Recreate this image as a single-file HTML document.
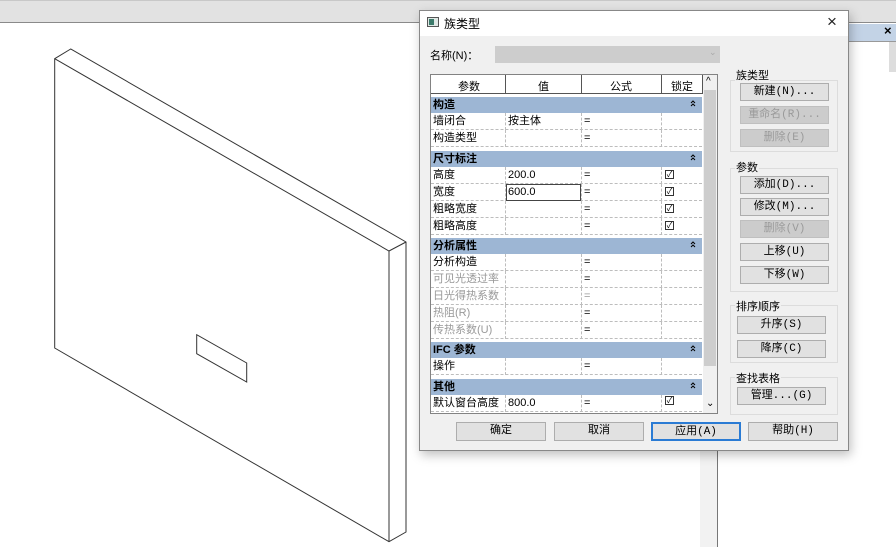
<!DOCTYPE html>
<html><head><meta charset="utf-8"><style>
*{box-sizing:border-box;margin:0;padding:0}
body{width:896px;height:547px;position:relative;overflow:hidden;background:#fff;font-family:"Liberation Sans","Noto Sans CJK SC",sans-serif;font-size:11px;color:#000}
.a{position:absolute}
.btn{position:absolute;background:#e1e1e1;border:1px solid #adadad;text-align:center;font-size:11px;line-height:16px;font-family:"Liberation Mono","Noto Sans CJK SC",monospace}
.dis{background:#cccccc;border-color:#bfbfbf;color:#9a9a9a}
.grp{position:absolute;border:1px solid #dcdcdc}
.lbl{position:absolute;font-size:11px;background:#f0f0f0;padding:0 1px}
.row{position:absolute;left:431px;width:271px;height:17px;background:#fff;border-bottom:1px dashed #bdbdbd}
.row span{position:absolute;top:1px;line-height:15px;font-size:11px}
.c{position:absolute;top:0;height:17px;border-left:1px dashed #bdbdbd}
.hd{position:absolute;left:431px;width:271px;height:17px;background:#9db6d4;font-weight:bold;line-height:17px;padding-left:2px;font-size:11px;border-top:1px solid #fff}
.hd svg{position:absolute;right:6px;top:3px}
.g{color:#999}
.cb{position:absolute;left:234px;top:3px;width:9px;height:9px;border:1px solid #333;font-size:8px;line-height:7px;text-align:center}
</style></head><body>
<div class="a" style="left:0;top:0;width:896px;height:23px;background:#e2e2e2;border-bottom:1px solid #8a8a8a"></div>
<div class="a" style="left:0;top:0;width:896px;height:1px;background:#c8c8c8"></div>
<div class="a" style="left:845px;top:24px;width:51px;height:18px;background:#c3d3e6;border-bottom:1px solid #999"></div>
<div class="a" style="left:884px;top:23px;font-size:13px;font-weight:bold">×</div>
<div class="a" style="left:889px;top:42px;width:7px;height:30px;background:#ddd"></div>
<div class="a" style="left:700px;top:450px;width:17px;height:97px;background:#f2f2f2"></div>
<div class="a" style="left:717px;top:450px;width:1px;height:97px;background:#777"></div>

<svg class="a" style="left:0;top:0" width="420" height="547" fill="none" stroke="#333" stroke-width="1">
<polygon points="70.7,49 54.7,58.7 54.7,348 389,541.7 406,532 406,242"/>
<polyline points="54.7,58.7 389,251 406,242"/>
<line x1="389" y1="251" x2="389" y2="541.7"/>
<polygon points="196.7,334.7 196.7,353.7 246.7,382 246.7,363"/>
</svg>

<div class="a" style="left:419px;top:10px;width:430px;height:441px;background:#f0f0f0;border:1px solid #888;box-shadow:2px 4px 10px rgba(0,0,0,.25)"></div>
<div class="a" style="left:420px;top:11px;width:428px;height:25px;background:#fff"></div>
<div class="a" style="left:427px;top:17px;width:12px;height:10px;border:1px solid #555;background:#dfe8e5"><div style="position:absolute;left:1px;top:1px;width:5px;height:6px;background:#3b7a6a"></div></div>
<div class="a" style="left:444px;top:15px;font-size:12px">族类型</div>
<div class="a" style="left:827px;top:12px;font-size:17px;color:#222">×</div>
<div class="a" style="left:430px;top:47px;font-size:11px">名称(N)：</div>
<div class="a" style="left:495px;top:46px;width:225px;height:17px;background:#cdcdcd"></div>
<div class="a" style="left:709px;top:47px;font-size:9px;color:#aaa">⌄</div>

<div class="a" style="left:430px;top:74px;width:288px;height:340px;border:1px solid #828282;background:#fff"></div>
<div class="a" style="left:431px;top:75px;width:271px;height:19px;background:#fff;border-bottom:1px solid #555"></div>
<div class="a" style="left:505px;top:75px;width:1px;height:19px;background:#555"></div>
<div class="a" style="left:581px;top:75px;width:1px;height:19px;background:#555"></div>
<div class="a" style="left:661px;top:75px;width:1px;height:19px;background:#555"></div>
<div class="a" style="left:702px;top:75px;width:1px;height:19px;background:#555"></div>
<div class="a" style="left:458px;top:78px">参数</div>
<div class="a" style="left:538px;top:78px">值</div>
<div class="a" style="left:610px;top:78px">公式</div>
<div class="a" style="left:671px;top:78px">锁定</div>
<div class="a" style="left:703px;top:75px;width:14px;height:338px;background:#f0f0f0"></div>
<div class="a" style="left:704px;top:90px;width:12px;height:276px;background:#cdcdcd"></div>
<div class="a" style="left:706px;top:76px;font-size:10px">^</div>
<div class="a" style="left:706px;top:398px;font-size:10px">⌄</div>

<div class="hd" style="top:96px">构造<svg width="6" height="7"><path d="M1 3L3 1L5 3M1 6L3 4L5 6" stroke="#000" fill="none"/></svg></div>
<div class="row" style="top:113px"><span style="left:2px">墙闭合</span><div class="c" style="left:74px"></div><span style="left:77px">按主体</span><div class="c" style="left:150px"></div><span style="left:153px">=</span><div class="c" style="left:230px"></div></div>
<div class="row" style="top:130px"><span style="left:2px">构造类型</span><div class="c" style="left:74px"></div><div class="c" style="left:150px"></div><span style="left:153px">=</span><div class="c" style="left:230px"></div></div>
<div class="hd" style="top:150px">尺寸标注<svg width="6" height="7"><path d="M1 3L3 1L5 3M1 6L3 4L5 6" stroke="#000" fill="none"/></svg></div>
<div class="row" style="top:167px"><span style="left:2px">高度</span><div class="c" style="left:74px"></div><span style="left:77px">200.0</span><div class="c" style="left:150px"></div><span style="left:153px">=</span><div class="c" style="left:230px"></div><div class="cb">✓</div></div>
<div class="row" style="top:184px"><span style="left:2px">宽度</span><div class="c" style="left:74px"></div><div class="a" style="left:75px;top:0;width:75px;height:17px;border:1px solid #444"></div><span style="left:77px">600.0</span><div class="c" style="left:150px"></div><span style="left:153px">=</span><div class="c" style="left:230px"></div><div class="cb">✓</div></div>
<div class="row" style="top:201px"><span style="left:2px">粗略宽度</span><div class="c" style="left:74px"></div><div class="c" style="left:150px"></div><span style="left:153px">=</span><div class="c" style="left:230px"></div><div class="cb">✓</div></div>
<div class="row" style="top:218px"><span style="left:2px">粗略高度</span><div class="c" style="left:74px"></div><div class="c" style="left:150px"></div><span style="left:153px">=</span><div class="c" style="left:230px"></div><div class="cb">✓</div></div>
<div class="hd" style="top:237px">分析属性<svg width="6" height="7"><path d="M1 3L3 1L5 3M1 6L3 4L5 6" stroke="#000" fill="none"/></svg></div>
<div class="row" style="top:254px"><span style="left:2px">分析构造</span><div class="c" style="left:74px"></div><div class="c" style="left:150px"></div><span style="left:153px">=</span><div class="c" style="left:230px"></div></div>
<div class="row" style="top:271px"><span class="g" style="left:2px">可见光透过率</span><div class="c" style="left:74px"></div><div class="c" style="left:150px"></div><span style="left:153px">=</span><div class="c" style="left:230px"></div></div>
<div class="row" style="top:288px"><span class="g" style="left:2px">日光得热系数</span><div class="c" style="left:74px"></div><div class="c" style="left:150px"></div><span class="g" style="left:153px">=</span><div class="c" style="left:230px"></div></div>
<div class="row" style="top:305px"><span class="g" style="left:2px">热阻(R)</span><div class="c" style="left:74px"></div><div class="c" style="left:150px"></div><span style="left:153px">=</span><div class="c" style="left:230px"></div></div>
<div class="row" style="top:322px"><span class="g" style="left:2px">传热系数(U)</span><div class="c" style="left:74px"></div><div class="c" style="left:150px"></div><span style="left:153px">=</span><div class="c" style="left:230px"></div></div>
<div class="hd" style="top:341px">IFC 参数<svg width="6" height="7"><path d="M1 3L3 1L5 3M1 6L3 4L5 6" stroke="#000" fill="none"/></svg></div>
<div class="row" style="top:358px"><span style="left:2px">操作</span><div class="c" style="left:74px"></div><div class="c" style="left:150px"></div><span style="left:153px">=</span><div class="c" style="left:230px"></div></div>
<div class="hd" style="top:378px">其他<svg width="6" height="7"><path d="M1 3L3 1L5 3M1 6L3 4L5 6" stroke="#000" fill="none"/></svg></div>
<div class="row" style="top:395px"><span style="left:2px">默认窗台高度</span><div class="c" style="left:74px"></div><span style="left:77px">800.0</span><div class="c" style="left:150px"></div><span style="left:153px">=</span><div class="c" style="left:230px"></div><div class="cb" style="top:1px">✓</div></div>

<div class="grp" style="left:730px;top:80px;width:108px;height:72px"></div>
<div class="lbl" style="left:735px;top:67px">族类型</div>
<div class="btn" style="left:740px;top:83px;width:89px;height:18px">新建(N)...</div>
<div class="btn dis" style="left:740px;top:106px;width:89px;height:18px">重命名(R)...</div>
<div class="btn dis" style="left:740px;top:129px;width:89px;height:18px">删除(E)</div>

<div class="grp" style="left:730px;top:168px;width:108px;height:124px"></div>
<div class="lbl" style="left:735px;top:159px">参数</div>
<div class="btn" style="left:740px;top:176px;width:89px;height:18px">添加(D)...</div>
<div class="btn" style="left:740px;top:198px;width:89px;height:18px">修改(M)...</div>
<div class="btn dis" style="left:740px;top:220px;width:89px;height:18px">删除(V)</div>
<div class="btn" style="left:740px;top:243px;width:89px;height:18px">上移(U)</div>
<div class="btn" style="left:740px;top:266px;width:89px;height:18px">下移(W)</div>

<div class="grp" style="left:730px;top:305px;width:108px;height:58px"></div>
<div class="lbl" style="left:735px;top:298px">排序顺序</div>
<div class="btn" style="left:737px;top:316px;width:89px;height:18px">升序(S)</div>
<div class="btn" style="left:737px;top:340px;width:89px;height:18px">降序(C)</div>

<div class="grp" style="left:730px;top:377px;width:108px;height:38px"></div>
<div class="lbl" style="left:735px;top:370px">查找表格</div>
<div class="btn" style="left:737px;top:387px;width:89px;height:18px">管理...(G)</div>

<div class="btn" style="left:456px;top:422px;width:90px;height:19px;line-height:17px">确定</div>
<div class="btn" style="left:554px;top:422px;width:90px;height:19px;line-height:17px">取消</div>
<div class="btn" style="left:651px;top:422px;width:90px;height:19px;line-height:17px;border:2px solid #2a7bd4">应用(A)</div>
<div class="btn" style="left:748px;top:422px;width:90px;height:19px;line-height:17px">帮助(H)</div>
</body></html>
